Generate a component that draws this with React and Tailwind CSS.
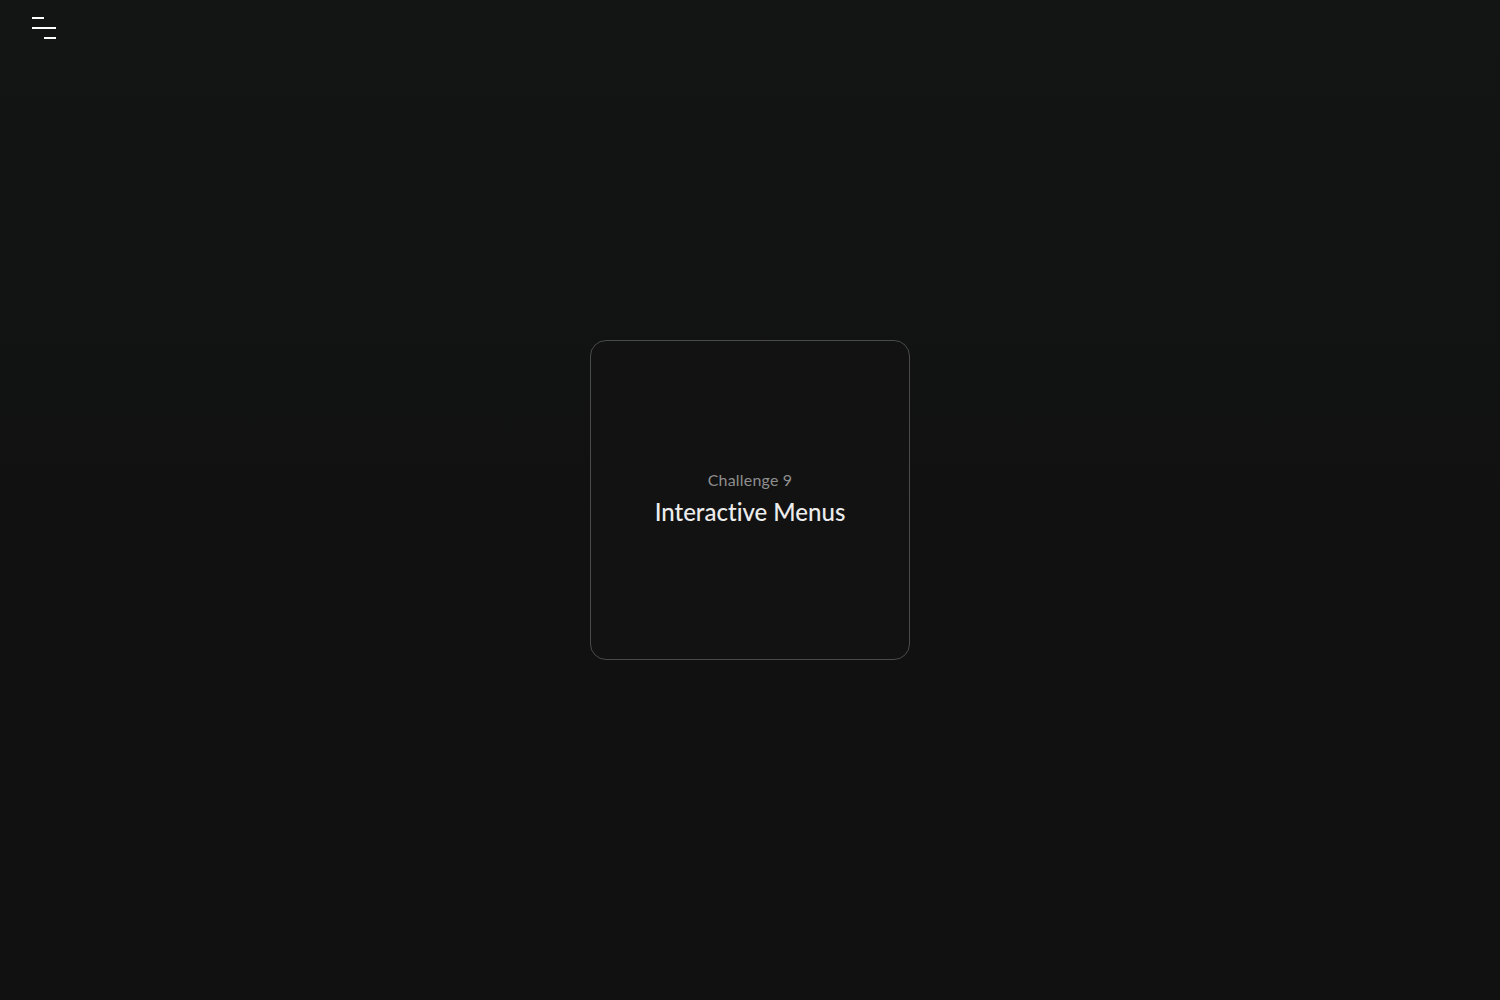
import React from 'react';

function MenuIcon() {
  return (
    <div className="flex flex-col gap-2 w-6">
      <span className="block h-[2px] w-3 bg-white" />
      <span className="block h-[2px] w-6 bg-white" />
      <span className="block h-[2px] w-3 self-end bg-white" />
    </div>
  );
}

export default function App() {
  return (
    <div
      className="min-h-screen w-full bg-gradient-to-b from-[#121514] via-[#111111] to-[#111111] flex flex-col [font-variant-ligatures:none]"
      style={{ fontFamily: 'Lato, "Noto Sans", sans-serif' }}
    >
      <header className="h-[56px] pl-8 pt-[17px]">
        <button className="block" aria-label="Open menu">
          <MenuIcon />
        </button>
      </header>

      <main className="flex-1 flex items-start justify-center pt-[284px]">
        <div className="w-[320px] h-[320px] rounded-2xl border border-[#4a4a4a] bg-[#121212] flex flex-col items-center justify-center gap-2 pb-1">
          <p className="text-[16px] leading-5 tracking-[0.2px] text-[#8f8f8f]">Challenge 9</p>
          <h1 className="text-[24px] leading-7 font-medium text-[#ececec]">Interactive Menus</h1>
        </div>
      </main>
    </div>
  );
}
